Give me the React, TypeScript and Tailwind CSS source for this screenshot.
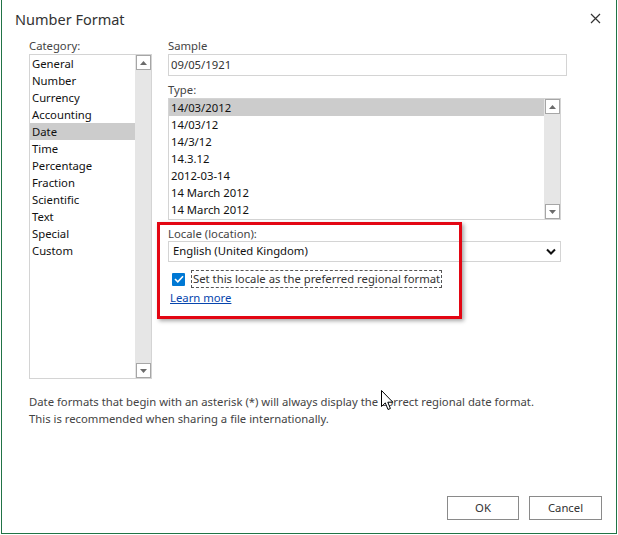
import React from "react";

const FONT = { fontFamily: '"Segoe UI", "Noto Sans", "Liberation Sans", sans-serif' };

const categories = [
  "General",
  "Number",
  "Currency",
  "Accounting",
  "Date",
  "Time",
  "Percentage",
  "Fraction",
  "Scientific",
  "Text",
  "Special",
  "Custom",
];

const types = [
  "14/03/2012",
  "14/03/12",
  "14/3/12",
  "14.3.12",
  "2012-03-14",
  "14 March 2012",
  "14 March 2012",
];

function ArrowBtn({ dir }: { dir: "up" | "down" }) {
  return (
    <div className="flex h-[15px] w-[15px] items-center justify-center border border-[#a6a6a6] bg-white">
      <svg width="7" height="4" viewBox="0 0 7 4">
        {dir === "up" ? (
          <path d="M0 4 L3.5 0 L7 4 Z" fill="#6b6b6b" />
        ) : (
          <path d="M0 0 L3.5 4 L7 0 Z" fill="#6b6b6b" />
        )}
      </svg>
    </div>
  );
}

function ScrollBar() {
  return (
    <div className="flex w-[16px] flex-col justify-between bg-[#e6e6e6] pl-[1px]">
      <ArrowBtn dir="up" />
      <ArrowBtn dir="down" />
    </div>
  );
}

export default function App() {
  return (
    <div className="h-[535px] w-[618px] overflow-hidden bg-white" style={FONT}>
      <div className="relative ml-[1px] flex h-[534px] w-[616px] flex-col border-x border-b border-[#217346] bg-white">
        {/* header */}
        <div className="flex h-[38px] items-center justify-between pl-[13px] pr-[15px] pt-[2px]">
          <span className="text-[14.5px] text-[#333]">Number Format</span>
          <svg width="11" height="11" viewBox="0 0 11 11" className="mb-[4px]">
            <path d="M1 1 L10 10 M10 1 L1 10" stroke="#333" strokeWidth="1.2" />
          </svg>
        </div>

        {/* body */}
        <div className="flex gap-[16px] pl-[27px]">
          {/* category column */}
          <div className="flex w-[123px] flex-col">
            <div className="h-[16px] text-[11.3px] leading-[16px] text-[#444]">Category:</div>
            <div className="flex h-[325px] border border-[#d4d4d4]">
              <div className="flex flex-1 flex-col">
                {categories.map((c) => (
                  <div
                    key={c}
                    className={`h-[17px] pl-[2px] text-[11.3px] leading-[17px] text-[#111] ${
                      c === "Date" ? "bg-[#cccccc]" : ""
                    }`}
                  >
                    {c}
                  </div>
                ))}
              </div>
              <ScrollBar />
            </div>
          </div>

          {/* right column */}
          <div className="flex w-[399px] flex-col">
            <div className="h-[16px] text-[11.3px] leading-[16px] text-[#444]">Sample</div>
            <div className="flex h-[22px] items-center border border-[#d4d4d4] pl-[2px] text-[11.3px] text-[#333]">
              09/05/1921
            </div>
            <div className="h-[22px] pt-[7px] text-[11.3px] leading-[14px] text-[#444]">Type:</div>
            <div className="flex h-[122px] w-[393px] border border-[#d4d4d4]">
              <div className="flex flex-1 flex-col">
                {types.map((t, i) => (
                  <div
                    key={i}
                    className={`h-[17px] pl-[2px] text-[11.3px] leading-[17px] text-[#111] ${
                      i === 0 ? "bg-[#cccccc]" : ""
                    }`}
                  >
                    {t}
                  </div>
                ))}
              </div>
              <ScrollBar />
            </div>

            <div className="mt-[7px] h-[14px] text-[11.3px] leading-[14px] text-[#444]">Locale (location):</div>
            <div className="flex h-[21px] w-[393px] items-center justify-between border border-[#d4d4d4] pl-[4px] pr-[4px] text-[11.3px] text-[#111]">
              <span>English (United Kingdom)</span>
              <svg width="10" height="7" viewBox="0 0 10 7">
                <path d="M1 1.5 L5 5.5 L9 1.5" stroke="#111" strokeWidth="2" fill="none" />
              </svg>
            </div>

            <div className="mt-[8px] flex items-center gap-[6px] pl-[4px]">
              <div className="flex h-[13px] w-[13px] items-center justify-center rounded-[1px] bg-[#0078d4]">
                <svg width="10" height="8" viewBox="0 0 10 8">
                  <path d="M1 4 L3.8 6.8 L9 1.2" stroke="white" strokeWidth="1.6" fill="none" />
                </svg>
              </div>
              <div className="flex h-[18px] items-center border border-dashed border-[#555] px-[1px] text-[11.3px] text-[#333]">
                Set this locale as the preferred regional format
              </div>
            </div>
            <div className="mt-[2px] pl-[2px] text-[11.3px] leading-[16px] text-[#0645ad] underline">Learn more</div>
          </div>
        </div>

        {/* note */}
        <div className="mt-[14px] pl-[27px] text-[11.3px] leading-[17px] text-[#444]">
          <div>Date formats that begin with an asterisk (*) will always display the correct regional date format.</div>
          <div>This is recommended when sharing a file internationally.</div>
        </div>

        <div className="flex-1" />

        {/* buttons */}
        <div className="flex justify-end gap-[10px] pb-[13px] pr-[14px]">
          <button className="h-[24px] w-[72px] border border-[#8a8a8a] bg-white text-[11.3px] text-[#333]">OK</button>
          <button className="h-[24px] w-[73px] border border-[#8a8a8a] bg-white text-[11.3px] text-[#333]">Cancel</button>
        </div>

        {/* red highlight annotation */}
        <div className="absolute left-[155px] top-[222px] h-[97px] w-[305px] border-[3px] border-[#e30613] shadow-[2px_2px_4px_rgba(0,0,0,0.35)]" />

        {/* mouse pointer */}
        <svg
          className="absolute left-[379px] top-[390px]"
          width="13"
          height="21"
          viewBox="0 0 13 21"
        >
          <path
            d="M0.5 0.5 L0.5 16.5 L4.3 12.9 L7 19.5 L9.4 18.5 L6.8 12.2 L11.8 12.2 Z"
            fill="white"
            stroke="black"
            strokeWidth="1"
            strokeLinejoin="round"
          />
        </svg>
      </div>
    </div>
  );
}
